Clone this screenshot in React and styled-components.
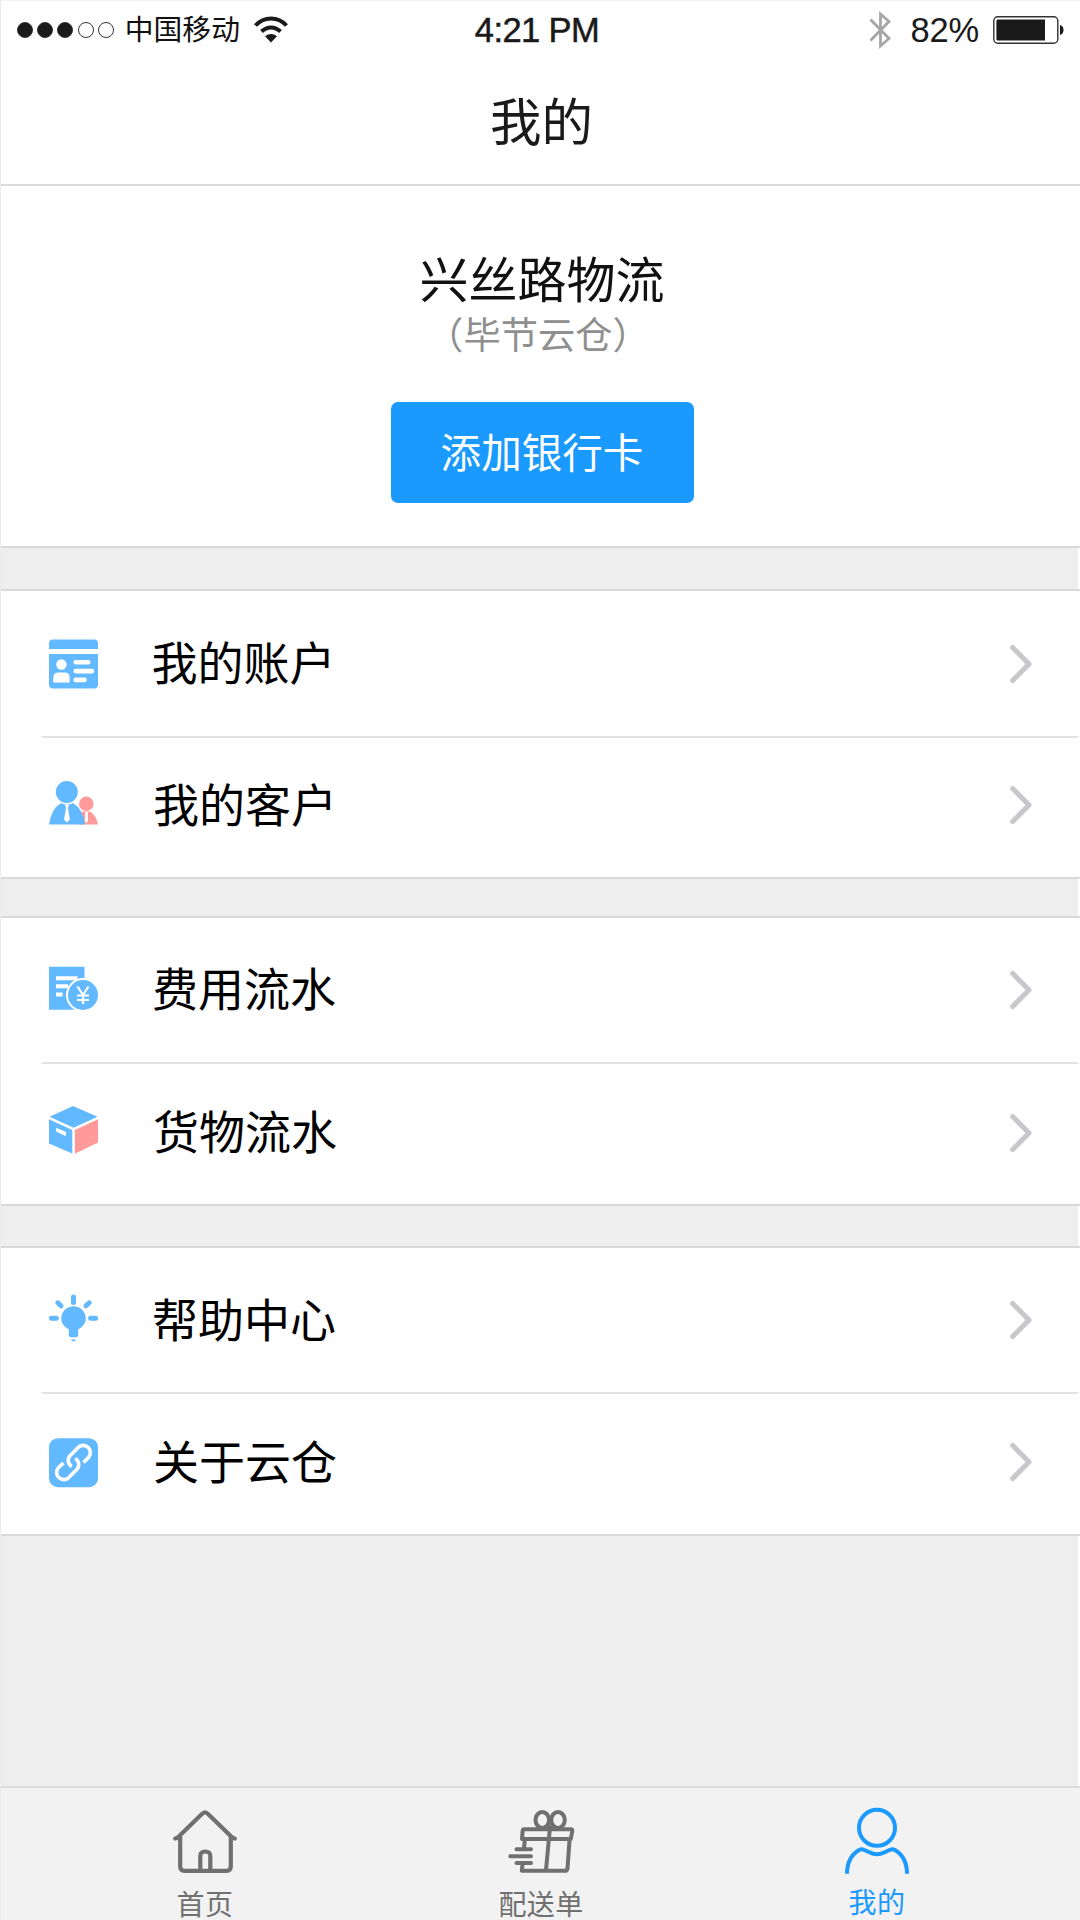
import React from "react";
import styled, { createGlobalStyle } from "styled-components";

const GlobalStyle = createGlobalStyle`
  * {
    box-sizing: border-box;
  }

  body {
    margin: 0;
    background-color: #fff;
    font-family: "Noto Sans CJK SC", sans-serif;
  }
`;

const Container = styled.div`
  display: flex;
  flex-direction: column;
  width: 1080px;
  height: 1920px;
  overflow: hidden;
  background-color: #fff;
  border-left: 1px solid #ececec;
`;

const TopBar = styled.header`
  height: 186px;
  background-color: #fff;
  border-top: 1px solid #f3f3f3;
  border-bottom: 2px solid #dcdcdc;
`;

const StatusBar = styled.div`
  display: flex;
  justify-content: space-between;
  height: 57px;
  padding: 0 15px 0 16px;
  color: #1a1a1a;
`;

const StatusGroup = styled.div`
  display: flex;
  flex: 1;
  align-items: center;
  justify-content: ${(props) => props.$align || "flex-start"};
`;

const SignalDots = styled.div`
  display: flex;
  gap: 4.2px;
  margin-right: 11px;
`;

const Dot = styled.span`
  width: 16px;
  height: 16px;
  border: 1px solid #333;
  border-radius: 50%;
  background-color: ${(props) => (props.$filled ? "#1a1a1a" : "transparent")};
`;

const Carrier = styled.span`
  margin-right: 14px;
  padding-bottom: 3px;
  font-size: 28.8px;
  line-height: 40px;
  color: #111;
`;

const Clock = styled.span`
  font-family: "Liberation Sans", Arial, sans-serif;
  font-size: 34.5px;
  letter-spacing: -0.6px;
  line-height: 40px;
  padding: 1px 8px 0 0;
  -webkit-text-stroke: 0.5px #1a1a1a;
`;

const BatteryLevel = styled.span`
  margin: 1px 14px 0 20px;
  font-family: "Liberation Sans", Arial, sans-serif;
  font-size: 34.5px;
  letter-spacing: -0.2px;
  line-height: 40px;
`;

const Title = styled.h1`
  margin: 20px 0 0;
  padding-left: 2px;
  font-size: 51.5px;
  font-weight: 400;
  line-height: 81px;
  text-align: center;
  color: #1a1a1a;
`;

const Profile = styled.section`
  display: flex;
  flex-direction: column;
  align-items: center;
  height: 362px;
  padding: 61px 0 0 3px;
  background-color: #fff;
  border-bottom: 2px solid #d9d9d9;
`;

const CompanyName = styled.div`
  font-size: 49px;
  line-height: 60px;
  color: #111;
`;

const WarehouseName = styled.div`
  margin: 1px 8px 0 0;
  font-size: 37.3px;
  line-height: 50px;
  color: #8f8f8f;
`;

const AddCardButton = styled.button`
  width: 303px;
  height: 101px;
  margin-top: 44px;
  padding: 0 0 4px;
  border: none;
  border-radius: 7px;
  background-color: #1a99ff;
  font-family: inherit;
  font-size: 40.6px;
  line-height: 97px;
  color: #fff;
  cursor: pointer;
`;

const Spacer = styled.div`
  flex: ${(props) => (props.$height ? `0 0 ${props.$height}px` : "1")};
  margin-right: 2px;
  background-color: #eee;
`;

const MenuGroup = styled.section`
  background-color: #fff;
  border-top: 2px solid #d9d9d9;
  border-bottom: 2px solid #d9d9d9;
`;

const MenuRow = styled.div`
  display: flex;
  align-items: center;
  height: ${(props) => props.$height}px;
  margin-left: 41px;
  margin-right: 2px;
  padding: 0 46px ${(props) => props.$lift || 0}px 7px;

  & + & {
    border-top: 2px solid #e2e2e2;
  }
`;

const MenuLabel = styled.span`
  flex: 1;
  margin-left: ${(props) => props.$indent}px;
  padding-bottom: 7px;
  font-size: 46px;
  line-height: 60px;
  color: #000;
`;

const TabBar = styled.nav`
  display: flex;
  height: 134px;
  padding-left: 36px;
  background-color: #f2f2f2;
  border-top: 2px solid #dcdcdc;
`;

const Tab = styled.div`
  display: flex;
  flex-direction: column;
  align-items: center;
  width: 336px;
  padding-top: 20px;
  color: ${(props) => (props.$active ? "#1a99ff" : "#707070")};
`;

const TabLabel = styled.span`
  margin-top: ${(props) => props.$top}px;
  font-size: 28px;
  line-height: 36px;
  letter-spacing: 0.4px;
`;

const IconSvg = styled.svg`
  display: block;
  flex-shrink: 0;
  overflow: visible;
`;

const blue = "#62b9ff";
const pink = "#ff9a9a";

const WifiIcon = () => (
  <IconSvg width="34" height="27" viewBox="0 0 34 27" fill="none">
    <path d="M1.5 9.5C10 0 24 0 32.5 9.5" stroke="#1a1a1a" strokeWidth="4" />
    <path d="M7.5 15.5C13 10 21 10 26.5 15.5" stroke="#1a1a1a" strokeWidth="4" />
    <path d="M11 20.2Q17 15.6 23 20.2L17 26.5Z" fill="#1a1a1a" />
  </IconSvg>
);

const BluetoothIcon = () => (
  <IconSvg width="22" height="38" viewBox="0 0 22 38" fill="none">
    <path
      d="M1.5 8.5L20 27.5L11.5 35V3L20 10.5L1.5 29.5"
      stroke="#a6a6a6"
      strokeWidth="2.8"
    />
  </IconSvg>
);

const BatteryIcon = () => (
  <IconSvg width="72" height="28" viewBox="0 0 72 28" fill="none">
    <rect x="0.8" y="0.8" width="64" height="26.4" rx="4" stroke="#333" strokeWidth="1.4" />
    <path d="M5 3.4H52V24.6H5Q3.4 24.6 3.4 23V5Q3.4 3.4 5 3.4Z" fill="#1a1a1a" />
    <path d="M67 9Q70.5 10 70.5 14T67 19Z" fill="#1a1a1a" />
  </IconSvg>
);

const Chevron = () => (
  <IconSvg width="24" height="40" viewBox="0 0 24 40" fill="none">
    <path
      d="M4.7 3.5L21 20L4.7 36.5"
      stroke="#c7c7cc"
      strokeWidth="5"
      strokeLinecap="round"
      strokeLinejoin="round"
    />
  </IconSvg>
);

const AccountIcon = () => (
  <IconSvg width="49" height="49" viewBox="0 -0.5 49 49">
    <path d="M4 0H45Q49 0 49 4V9.5H0V4Q0 0 4 0Z" fill={blue} />
    <path d="M0 14.5H49V45Q49 49 45 49H4Q0 49 0 45Z" fill={blue} />
    <circle cx="12.4" cy="25" r="5.2" fill="#fff" />
    <path d="M4.3 43V38Q4.3 33 9.3 33H15.6Q20.6 33 20.6 38V43Z" fill="#fff" />
    <path
      d="M26.7 22.8H39.3M26.7 31.6H43M26.7 40.4H35.5"
      stroke="#fff"
      strokeWidth="4.6"
      strokeLinecap="round"
    />
  </IconSvg>
);

const CustomerIcon = () => (
  <IconSvg width="49" height="49" viewBox="0 0 49 49">
    <circle cx="37.3" cy="22.8" r="7.2" fill={pink} />
    <path d="M30 43.5V33L34 30.5H41Q47 34 49 43.5Z" fill={pink} />
    <path d="M36.3 31H38.7L39 40L37.4 42L35.8 40Z" fill="#fff" />
    <circle cx="17.8" cy="11" r="11" fill={blue} />
    <path d="M0 43.5Q2 28 12 22Q18 25 24 22Q34 28 36 43.5Z" fill={blue} />
    <path d="M16 23.5H20L19 27L20.8 38.5L17.8 41.5L15 38.5L17 27Z" fill="#fff" />
  </IconSvg>
);

const FeeIcon = () => (
  <IconSvg width="49" height="49" viewBox="0 0 49 49" fill="none">
    <path d="M0 1.7H35.5V44.7H0Z" fill={blue} />
    <path d="M7 13.2H28.5M7 21.2H19M7 29.6H13.5" stroke="#fff" strokeWidth="4" />
    <circle cx="34" cy="30" r="17" fill="#fff" />
    <circle cx="34" cy="30" r="15" fill={blue} />
    <path
      d="M28.5 21.5L34 30L39.5 21.5M34 30V39M28 30.5H40M28 35H40"
      stroke="#fff"
      strokeWidth="2.2"
    />
  </IconSvg>
);

const GoodsIcon = () => (
  <IconSvg width="49" height="49" viewBox="0 0 49 49" fill="none">
    <path d="M24 -2L48.5 8.8L24.5 19.8L0.5 8.8Z" fill={blue} />
    <path d="M0 11.2L23.3 22V45.5L0 35.5Z" fill={blue} />
    <path d="M25.8 22L49 11.2V34.5L25.8 45.8Z" fill={pink} />
    <path d="M7.5 20.5V23.3L16.5 27.5V24.2Z" fill="#fff" stroke="#fff" strokeWidth="1" />
  </IconSvg>
);

const HelpIcon = () => (
  <IconSvg width="49" height="49" viewBox="0 0 49 49">
    <path
      d="M24.5 1V6.5M8.8 6.8L12 9.8M40.2 6.8L37 9.8M2.4 22.3H7.4M41.6 22.3H46.6"
      stroke={blue}
      strokeWidth="5"
      strokeLinecap="round"
    />
    <path
      d="M24.5 10.3A12.2 12.2 0 0 1 36.7 22.5C36.7 28 33.2 31 29.2 33.3V39Q29.2 41.2 27 41.2H22Q19.8 41.2 19.8 39V33.3C15.8 31 12.3 28 12.3 22.5A12.2 12.2 0 0 1 24.5 10.3Z"
      fill={blue}
    />
    <path d="M22 43.5H27Q26.5 45.5 24.5 45.5T22 43.5Z" fill={blue} />
  </IconSvg>
);

const LinkIcon = () => (
  <IconSvg width="49" height="49" viewBox="0 0 49 49" fill="none">
    <rect y="0.2" width="49" height="49" rx="9" fill={blue} />
    <path
      d="M14.5 25L9.3 29.8A7.2 7.2 0 0 0 19.6 39.8L28 31.2A7 7 0 0 0 26.2 20.5"
      stroke="#fff"
      strokeWidth="3.6"
    />
    <path
      d="M34.5 24.4L39.7 19.2A7.2 7.2 0 0 0 29.4 9.2L21 17.8A7 7 0 0 0 22.8 28.5"
      stroke="#fff"
      strokeWidth="3.6"
    />
  </IconSvg>
);

const HomeIcon = () => (
  <IconSvg
    width="64"
    height="66"
    viewBox="0 0 64 66"
    fill="none"
    stroke="currentColor"
    strokeWidth="4.2"
    strokeLinecap="round"
    strokeLinejoin="round"
  >
    <path d="M2.2 30.5Q4 30 6 28.3L29.5 5.5Q32 3.2 34.5 5.5L58 28.3Q60 30 61.8 30.5" />
    <path d="M7.2 29V58.5Q7.2 62.8 11.5 62.8H53.5Q57.8 62.8 57.8 58.5V29" />
    <path d="M27.3 62V48Q27.3 43.5 32.3 43.5T37.3 48V62" />
  </IconSvg>
);

const DeliveryIcon = () => (
  <IconSvg
    width="66"
    height="66"
    viewBox="0.5 0 66 66"
    fill="none"
    stroke="currentColor"
    strokeWidth="4"
    strokeLinecap="round"
    strokeLinejoin="round"
  >
    <ellipse cx="34.8" cy="12" rx="6.8" ry="8" />
    <ellipse cx="50.5" cy="12" rx="6.8" ry="8" />
    <path d="M16.5 21.2H63.5Q65 21.2 64.8 23L63.3 31H14.5L15.2 22.5Q15.4 21.2 16.5 21.2Z" />
    <path d="M17.3 32L16.5 40.5M15.2 55L14.3 62.8H57.5Q59.5 62.8 60 60.5L62 32.5" />
    <path d="M42.5 19L38.5 62" />
    <path d="M9 41.3H23.5M2.8 48.3H23.5M9 55H23.5" />
  </IconSvg>
);

const UserIcon = () => (
  <IconSvg
    width="66"
    height="66"
    viewBox="0.5 -0.8 66 66"
    fill="none"
    stroke="currentColor"
    strokeWidth="4"
  >
    <circle cx="33.5" cy="19" r="18" />
    <path d="M3.5 65C3.5 53 9 45 16 41Q18 40 20.5 41C26 43 28 45.5 33.5 45.5S41 43 46.5 41Q49 40 51 41C58 45 63.5 53 63.5 65" />
  </IconSvg>
);

const menuGroups = [
  {
    gap: 41,
    rows: [
      { label: "我的账户", icon: AccountIcon, height: 145, indent: 53.5, lift: 0 },
      { label: "我的客户", icon: CustomerIcon, height: 141, indent: 55, lift: 5 },
    ],
  },
  {
    gap: 37,
    rows: [
      { label: "费用流水", icon: FeeIcon, height: 144, indent: 54, lift: 1 },
      { label: "货物流水", icon: GoodsIcon, height: 142, indent: 55, lift: 3 },
    ],
  },
  {
    gap: 40,
    rows: [
      { label: "帮助中心", icon: HelpIcon, height: 144, indent: 54, lift: 0 },
      { label: "关于云仓", icon: LinkIcon, height: 142, indent: 55, lift: 4 },
    ],
  },
];

const tabs = [
  { label: "首页", icon: HomeIcon, top: 11 },
  { label: "配送单", icon: DeliveryIcon, top: 11 },
  { label: "我的", icon: UserIcon, top: 9, active: true },
];

const App = () => {
  return (
    <Container>
      <GlobalStyle />
      <TopBar>
        <StatusBar>
          <StatusGroup>
            <SignalDots>
              {[1, 2, 3, 4, 5].map((n) => (
                <Dot key={n} $filled={n <= 3} />
              ))}
            </SignalDots>
            <Carrier>中国移动</Carrier>
            <WifiIcon />
          </StatusGroup>
          <StatusGroup $align="center">
            <Clock>4:21 PM</Clock>
          </StatusGroup>
          <StatusGroup $align="flex-end">
            <BluetoothIcon />
            <BatteryLevel>82%</BatteryLevel>
            <BatteryIcon />
          </StatusGroup>
        </StatusBar>
        <Title>我的</Title>
      </TopBar>
      <Profile>
        <CompanyName>兴丝路物流</CompanyName>
        <WarehouseName>（毕节云仓）</WarehouseName>
        <AddCardButton>添加银行卡</AddCardButton>
      </Profile>
      {menuGroups.map((group, index) => (
        <React.Fragment key={index}>
          <Spacer $height={group.gap} />
          <MenuGroup>
            {group.rows.map((row) => (
              <MenuRow key={row.label} $height={row.height} $lift={row.lift}>
                <row.icon />
                <MenuLabel $indent={row.indent}>{row.label}</MenuLabel>
                <Chevron />
              </MenuRow>
            ))}
          </MenuGroup>
        </React.Fragment>
      ))}
      <Spacer />
      <TabBar>
        {tabs.map((tab) => (
          <Tab key={tab.label} $active={tab.active}>
            <tab.icon />
            <TabLabel $top={tab.top}>{tab.label}</TabLabel>
          </Tab>
        ))}
      </TabBar>
    </Container>
  );
};

export default App;
